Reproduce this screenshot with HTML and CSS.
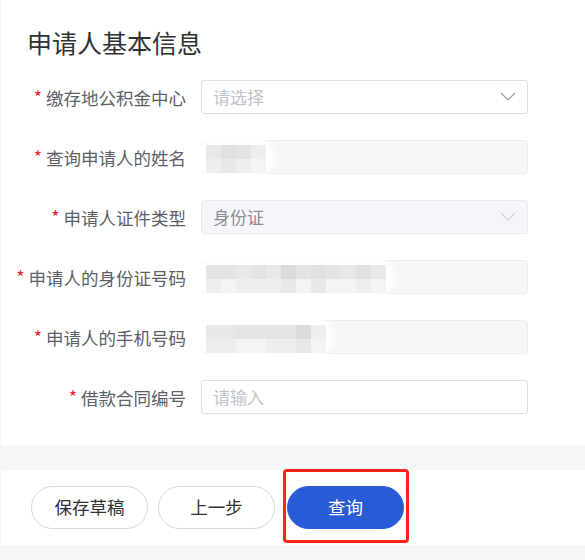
FILE: index.html
```html
<!DOCTYPE html>
<html lang="zh-CN">

<head>
    <meta charset="UTF-8">
    <meta name="viewport" content="width=device-width, initial-scale=1.0">
    <link rel="stylesheet" href="styles.css">
    <title>申请人基本信息</title>
</head>

<body>

    <div class="card">
        <h2 class="card-title">申请人基本信息</h2>

        <div class="form">
            <div class="row">
                <label><span class="star">*</span> 缴存地公积金中心</label>
                <div class="control select">
                    <span class="placeholder">请选择</span>
                    <svg class="arrow" width="16" height="9" viewBox="0 0 16 9"><path d="M1 1 L8 8 L15 1" fill="none" stroke="#9a9da5" stroke-width="1.2"/></svg>
                </div>
            </div>

            <div class="row">
                <label><span class="star">*</span> 查询申请人的姓名</label>
                <div class="control disabled">
                    <div class="smudge" style="width: 80px;"></div>
                    <div class="mosaic">
                        <span class="s2"></span><span class="s4"></span><span class="s3"></span><span class="s1"></span>
                        <span class="s1"></span><span class="s2"></span><span class="s1"></span><span class="s0"></span>
                    </div>
                </div>
            </div>

            <div class="row">
                <label><span class="star">*</span> 申请人证件类型</label>
                <div class="control select disabled">
                    <span class="value">身份证</span>
                    <svg class="arrow" width="16" height="9" viewBox="0 0 16 9"><path d="M1 1 L8 8 L15 1" fill="none" stroke="#cfd2d8" stroke-width="1.2"/></svg>
                </div>
            </div>

            <div class="row">
                <label><span class="star">*</span> 申请人的身份证号码</label>
                <div class="control disabled">
                    <div class="smudge" style="width: 200px;"></div>
                    <div class="mosaic wide">
                        <span class="s3"></span><span class="s3"></span><span class="s2"></span><span class="s3"></span><span class="s2"></span><span class="s5"></span><span class="s3"></span><span class="s4"></span><span class="s3"></span><span class="s2"></span><span class="s4"></span><span class="s2"></span>
                        <span class="s1"></span><span class="s0"></span><span class="s1"></span><span class="s1"></span><span class="s1"></span><span class="s2"></span><span class="s0"></span><span class="s2"></span><span class="s0"></span><span class="s0"></span><span class="s1"></span><span class="s0"></span>
                    </div>
                </div>
            </div>

            <div class="row">
                <label><span class="star">*</span> 申请人的手机号码</label>
                <div class="control disabled">
                    <div class="smudge" style="width: 140px;"></div>
                    <div class="mosaic mid">
                        <span class="s2"></span><span class="s2"></span><span class="s3"></span><span class="s3"></span><span class="s3"></span><span class="s3"></span><span class="s5"></span><span class="s1"></span>
                        <span class="s1"></span><span class="s1"></span><span class="s0"></span><span class="s0"></span><span class="s1"></span><span class="s1"></span><span class="s2"></span><span class="s0"></span>
                    </div>
                </div>
            </div>

            <div class="row">
                <label><span class="star">*</span> 借款合同编号</label>
                <div class="control">
                    <span class="placeholder">请输入</span>
                </div>
            </div>
        </div>
    </div>

    <div class="footer">
        <button class="btn">保存草稿</button>
        <button class="btn">上一步</button>
        <div class="query-wrap">
            <button class="btn primary">查询</button>
            <div class="highlight"></div>
        </div>
    </div>

</body>

</html>
```

FILE: styles.css
```css
body {
    font-family: "Noto Sans CJK SC", "Noto Sans", sans-serif;
    background: #f5f6f8;
    margin: 0;
    padding: 0 0 0 1px;
    color: #303133;
}

.card {
    background: #ffffff;
    padding: 25px 0 31px 0;
}

.card-title {
    margin: 0 0 21px 26px;
    font-size: 25px;
    font-weight: normal;
    line-height: 34px;
    color: #303133;
}

.row {
    display: flex;
    align-items: center;
    height: 34px;
    margin-bottom: 26px;
}

.row:last-child {
    margin-bottom: 0;
}

label {
    width: 185px;
    text-align: right;
    font-size: 17.5px;
    line-height: 34px;
    color: #5c5f66;
    white-space: nowrap;
}

.star {
    color: #f5222d;
    font-size: 18px;
    position: relative;
    top: -1px;
}

.control {
    position: relative;
    margin-left: 15px;
    width: 327px;
    height: 34px;
    box-sizing: border-box;
    border: 1px solid #dcdfe6;
    border-radius: 3px;
    background: #ffffff;
    display: flex;
    align-items: center;
    padding: 0 11px 2px 11px;
    font-size: 17px;
}

.control.disabled {
    background: #f7f7f8;
    border-color: #ebedf0;
}

.control.select.disabled {
    background: #f4f6f9;
    border-color: #e8eaee;
}

.placeholder {
    color: #c0c4cc;
}

.value {
    color: #8a8d93;
}

.arrow {
    margin-left: auto;
}

.smudge {
    position: absolute;
    left: -8px;
    top: -4px;
    height: 40px;
    background: #ffffff;
    border-radius: 20px;
    filter: blur(3px);
}

.mosaic {
    position: absolute;
    left: 4px;
    top: 4px;
    display: grid;
    grid-template-columns: repeat(4, 15px);
    grid-auto-rows: 14px;
}

.mosaic.wide {
    grid-template-columns: repeat(12, 15px);
}

.mosaic.mid {
    grid-template-columns: repeat(8, 15px);
}

.s0 { background: #f4f4f5; }
.s1 { background: #eeeef0; }
.s2 { background: #e8e8ea; }
.s3 { background: #e4e4e6; }
.s4 { background: #e0e1e3; }
.s5 { background: #dadbdd; }

.footer {
    margin-top: 25px;
    background: #ffffff;
    height: 75px;
    display: flex;
    align-items: center;
    padding-left: 30px;
}

.btn {
    width: 117px;
    height: 43px;
    border-radius: 22px;
    border: 1px solid #d4d7de;
    background: #ffffff;
    color: #303133;
    font-family: inherit;
    font-size: 17.5px;
    padding: 0 0 3px 0;
    margin-right: 10px;
    cursor: pointer;
}

.query-wrap {
    position: relative;
    margin-left: 2px;
}

.btn.primary {
    background: #2a5bd7;
    border-color: #2a5bd7;
    color: #ffffff;
    margin-right: 0;
}

.highlight {
    position: absolute;
    left: -4px;
    right: -5px;
    top: -17px;
    bottom: -14px;
    border: 3px solid #ff2419;
    border-radius: 4px;
}
```
